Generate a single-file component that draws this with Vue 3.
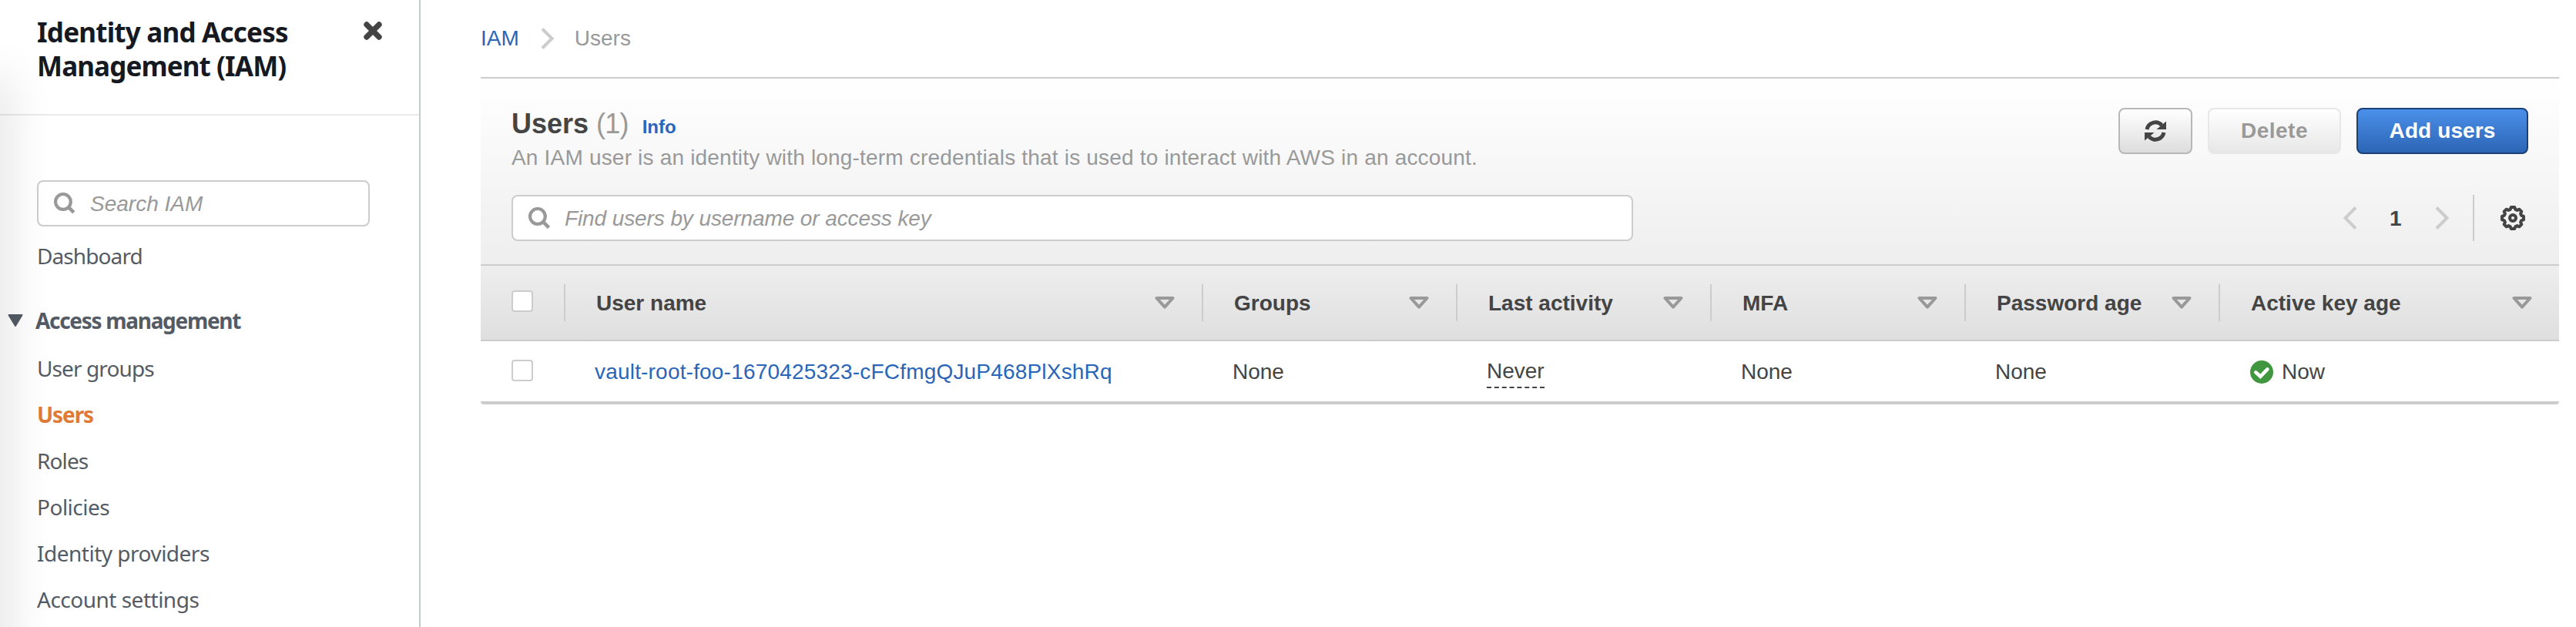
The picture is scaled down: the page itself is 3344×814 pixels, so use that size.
<script setup>
const nav = [
  { label: 'User groups' },
  { label: 'Users', active: true },
  { label: 'Roles' },
  { label: 'Policies', wide: true },
  { label: 'Identity providers', wide: true },
  { label: 'Account settings', wide: true },
]
const columns = ['User name', 'Groups', 'Last activity', 'MFA', 'Password age', 'Active key age']
</script>

<template>
  <div class="page">
    <aside class="sidebar">
      <header class="side-head">
        <h2><span class="t1">Identity and Access</span><br /><span class="t2">Management (IAM)</span></h2>
        <svg class="close" viewBox="0 0 24 24"><path d="M4 4L20 20M20 4L4 20" /></svg>
      </header>
      <div class="side-body">
        <div class="field side-search">
          <svg class="glass" viewBox="0 0 28 28"><circle cx="11.9" cy="11.9" r="9.9" /><path d="M18.6 18.6L25.8 25.8" /></svg>
          <span>Search IAM</span>
        </div>
        <a class="item dash">Dashboard</a>
        <div class="group">
          <svg class="caret" viewBox="0 0 20 16"><path d="M1.5 1H18.5L10 15Z" /></svg>
          <span>Access management</span>
        </div>
        <a v-for="n in nav" :key="n.label" class="item" :class="{ active: n.active, wide: n.wide }">{{ n.label }}</a>
      </div>
    </aside>

    <main class="main">
      <nav class="crumbs">
        <a>IAM</a>
        <svg viewBox="0 0 18 28"><path d="M2 1.5L14.5 14L2 26.5" /></svg>
        <span>Users</span>
      </nav>
      <section class="panel">
        <div class="panel-head">
          <div class="title-row">
            <div class="titles">
              <h1>Users <span class="count">(1)</span><a class="info">Info</a></h1>
              <p>An IAM user is an identity with long-term credentials that is used to interact with AWS in an account.</p>
            </div>
            <div class="actions">
              <button class="btn refresh">
                <svg viewBox="0 0 28 28">
                  <path class="arc" d="M3 12A11.2 11.2 0 0 1 22.3 6.6M25 16A11.2 11.2 0 0 1 5.7 21.4" />
                  <path class="tip" d="M28 1.5V12H15.5Z M0 26.5V16H12.5Z" />
                </svg>
              </button>
              <button class="btn delete">Delete</button>
              <button class="btn add">Add users</button>
            </div>
          </div>
          <div class="tools">
            <div class="field find">
              <svg class="glass" viewBox="0 0 28 28"><circle cx="11.9" cy="11.9" r="9.9" /><path d="M18.6 18.6L26.5 26.5" /></svg>
              <span>Find users by username or access key</span>
            </div>
            <div class="pager">
              <svg class="chev" viewBox="0 0 18 30"><path d="M16 1.5L2.5 15L16 28.5" /></svg>
              <b>1</b>
              <svg class="chev" viewBox="0 0 18 30"><path d="M2 1.5L15.5 15L2 28.5" /></svg>
              <i class="rule"></i>
              <svg class="gear" viewBox="0 0 32 32">
                <path d="M13.8 2H18.2L19.4 5L21.6 5.9L24.3 4.7L27.3 7.7L26.1 10.4L27 12.6L30 13.8V18.2L27 19.4L26.1 21.6L27.3 24.3L24.3 27.3L21.6 26.1L19.4 27L18.2 30H13.8L12.6 27L10.4 26.1L7.7 27.3L4.7 24.3L5.9 21.6L5 19.4L2 18.2V13.8L5 12.6L5.9 10.4L4.7 7.7L7.7 4.7L10.4 5.9L12.6 5Z" />
                <circle cx="16" cy="16" r="4" />
              </svg>
            </div>
          </div>
        </div>
        <div class="grid thead">
          <div class="cell check"><i class="box"></i></div>
          <div v-for="c in columns" :key="c" class="cell">
            <span>{{ c }}</span>
            <svg class="sort" viewBox="0 0 28 16"><path d="M3.5 2H24.5L14 13.6Z" /></svg>
          </div>
        </div>
        <div class="grid row">
          <div class="cell check"><i class="box"></i></div>
          <div class="cell"><a class="user">vault-root-foo-1670425323-cFCfmgQJuP468PlXshRq</a></div>
          <div class="cell">None</div>
          <div class="cell"><span class="never">Never</span></div>
          <div class="cell">None</div>
          <div class="cell">None</div>
          <div class="cell">
            <svg class="ok" viewBox="0 0 30 30"><circle cx="15" cy="15" r="15" /><path d="M7.3 15.4L13.3 20.8L22.4 11.4" /></svg>
            <span>Now</span>
          </div>
        </div>
      </section>
    </main>
  </div>
</template>

<style>
body { margin: 0; background: #fff; }
</style>

<style scoped>
.page {
  display: flex;
  width: 3344px;
  height: 814px;
  overflow: hidden;
  background: #fff;
  font-family: "Liberation Sans", Arial, sans-serif;
  font-size: 28px;
  line-height: 40px;
  color: #444;
}
h1, h2, p { margin: 0; }
svg { display: block; flex: none; fill: none; }
.sidebar {
  position: relative;
  box-sizing: border-box;
  width: 546px;
  height: 814px;
  flex: none;
  overflow: hidden;
  border-right: 2px solid #c3caca;
  font-family: "Noto Sans", "Open Sans", sans-serif;
  color: #545b64;
}
.sidebar::before {
  content: "";
  position: absolute;
  left: -20px;
  top: 106px;
  width: 20px;
  height: 900px;
  box-shadow: 0 0 60px 6px rgba(0, 0, 0, .16);
}
.side-head {
  display: flex;
  justify-content: space-between;
  box-sizing: border-box;
  height: 150px;
  padding: 20px 48px 0;
  border-bottom: 2px solid #eaeaea;
}
.side-head h2 {
  font-size: 35px;
  line-height: 44px;
  font-weight: 700;
  color: #16191f;
  white-space: nowrap;
}
.t1 { letter-spacing: -.78px; }
.t2 { letter-spacing: -.88px; }
.close { width: 24px; height: 24px; margin-top: 8px; }
.close path { stroke: #444; stroke-width: 7.4; stroke-linecap: round; }
.side-body { padding: 84px 0 0 48px; }
.field {
  display: flex;
  align-items: center;
  box-sizing: border-box;
  height: 60px;
  border: 2px solid #ccc;
  border-radius: 8px;
  background: #fff;
  font-family: "Liberation Sans", Arial, sans-serif;
  font-style: italic;
  color: #999;
  white-space: nowrap;
}
.glass { width: 28px; height: 28px; margin-left: 20px; }
.glass circle { stroke: #999; stroke-width: 4.2; }
.glass path { stroke: #999; stroke-width: 4.6; }
.field span { margin: 2px 0 0 19px; }
.side-search { width: 432px; background: none; }
.item {
  display: block;
  height: 60px;
  line-height: 60px;
  letter-spacing: -.9px;
  white-space: nowrap;
}
.item.wide { letter-spacing: -.5px; }
.item.active { color: #e07a35; font-weight: 700; letter-spacing: -1.1px; }
.dash { margin-top: 8px; }
.group {
  display: flex;
  align-items: center;
  height: 60px;
  margin: 24px 0 2px -38px;
  font-weight: 700;
  letter-spacing: -1.3px;
}
.group span { margin-left: 16px; }
.caret { width: 20px; height: 16px; }
.caret path { fill: #545b64; stroke: #545b64; stroke-width: 2; stroke-linejoin: round; }

.main { width: 2698px; margin-left: 78px; flex: none; }
.crumbs { display: flex; height: 100px; color: #999; }
.crumbs a, .crumbs span { margin-top: 30px; }
.crumbs svg { width: 18px; height: 28px; margin: 36px 26px 0 28px; }
.crumbs path, .chev path { stroke: #ccc; stroke-width: 4; }
a { color: #2a65b8; }
.item { color: inherit; }
.panel { border-top: 2px solid #ccc; border-bottom: 4px solid #ccc; border-radius: 0 0 4px 4px; }
.panel-head {
  box-sizing: border-box;
  height: 241px;
  padding: 38px 40px 0;
  background: linear-gradient(#fff, #eee);
}
.title-row { display: flex; justify-content: space-between; height: 113px; }
h1 { font-size: 36px; line-height: 42px; color: #444; }
h1, p { white-space: nowrap; }
.count { font-weight: 400; color: #999; letter-spacing: -.8px; }
.info { margin-left: 18px; font-size: 24px; }
p { color: #999; line-height: 37px; letter-spacing: .19px; }
.actions { display: flex; gap: 20px; }
.btn {
  display: flex;
  align-items: center;
  justify-content: center;
  box-sizing: border-box;
  height: 60px;
  padding: 0;
  border: 2px solid #b7b7b7;
  border-radius: 8px;
  font: bold 28px "Liberation Sans", Arial, sans-serif;
}
.refresh { width: 96px; background: linear-gradient(#fff, #ddd); }
.refresh svg { width: 28px; height: 28px; }
.arc { stroke: #444; stroke-width: 5; }
.tip { fill: #444; }
.delete { width: 173px; background: linear-gradient(#fff, #e7e7e7); border-color: #e7e7e7; color: #999; letter-spacing: .5px; }
.add { width: 223px; background: linear-gradient(#4a90e9, #2c65b5); border-color: #1c4078; color: #fff; letter-spacing: .1px; }
.tools { display: flex; justify-content: space-between; }
.find { width: 1456px; letter-spacing: -.1px; }
.pager { display: flex; align-items: center; height: 60px; }
.chev { width: 18px; height: 30px; }
.pager b { width: 16px; margin: 2px 43px 0 42px; }
.rule { width: 2px; height: 60px; margin: 0 34px 0 31px; background: #ccc; }
.gear { width: 32px; height: 32px; margin-right: 4px; }
.gear path, .gear circle { stroke: #444; stroke-width: 4; stroke-linejoin: round; }
.grid { display: grid; grid-template-columns: 110px 828px 330px 330px 330px 330px 440px; }
.thead {
  box-sizing: border-box;
  height: 100px;
  border-top: 2px solid #ccc;
  border-bottom: 2px solid #ccc;
  background: linear-gradient(#eee, #dfdfdf);
  font-weight: 700;
}
.cell { display: flex; align-items: center; box-sizing: border-box; padding: 3px 0 0 38px; white-space: nowrap; }
.thead .cell {
  justify-content: space-between;
  height: 48px;
  margin-top: 24px;
  padding: 0 34px 0 40px;
  border-right: 2px solid #ccc;
}
.thead .cell span { margin-top: 2px; }
.thead .cell:last-child { border-right: 0; }
.box { box-sizing: border-box; width: 28px; height: 28px; border: 2px solid #ccc; border-radius: 4px; background: #fff; }
.thead .check { padding: 0 0 4px 40px; }
.row .check { padding: 0 0 0 40px; }
.sort { width: 28px; height: 16px; }
.sort path { stroke: #999; stroke-width: 4; stroke-linejoin: round; }
.row { height: 78px; background: #fff; }
.row .cell { height: 76px; }
.user { letter-spacing: .19px; }
.never { height: 38px; margin-top: 2px; line-height: 36px; border-bottom: 2px dashed #444; }
.ok { width: 30px; height: 30px; margin: 0 11px 0 1px; }
.ok circle { fill: #41973f; }
.ok path { stroke: #fff; stroke-width: 4.6; stroke-linecap: round; }
</style>
